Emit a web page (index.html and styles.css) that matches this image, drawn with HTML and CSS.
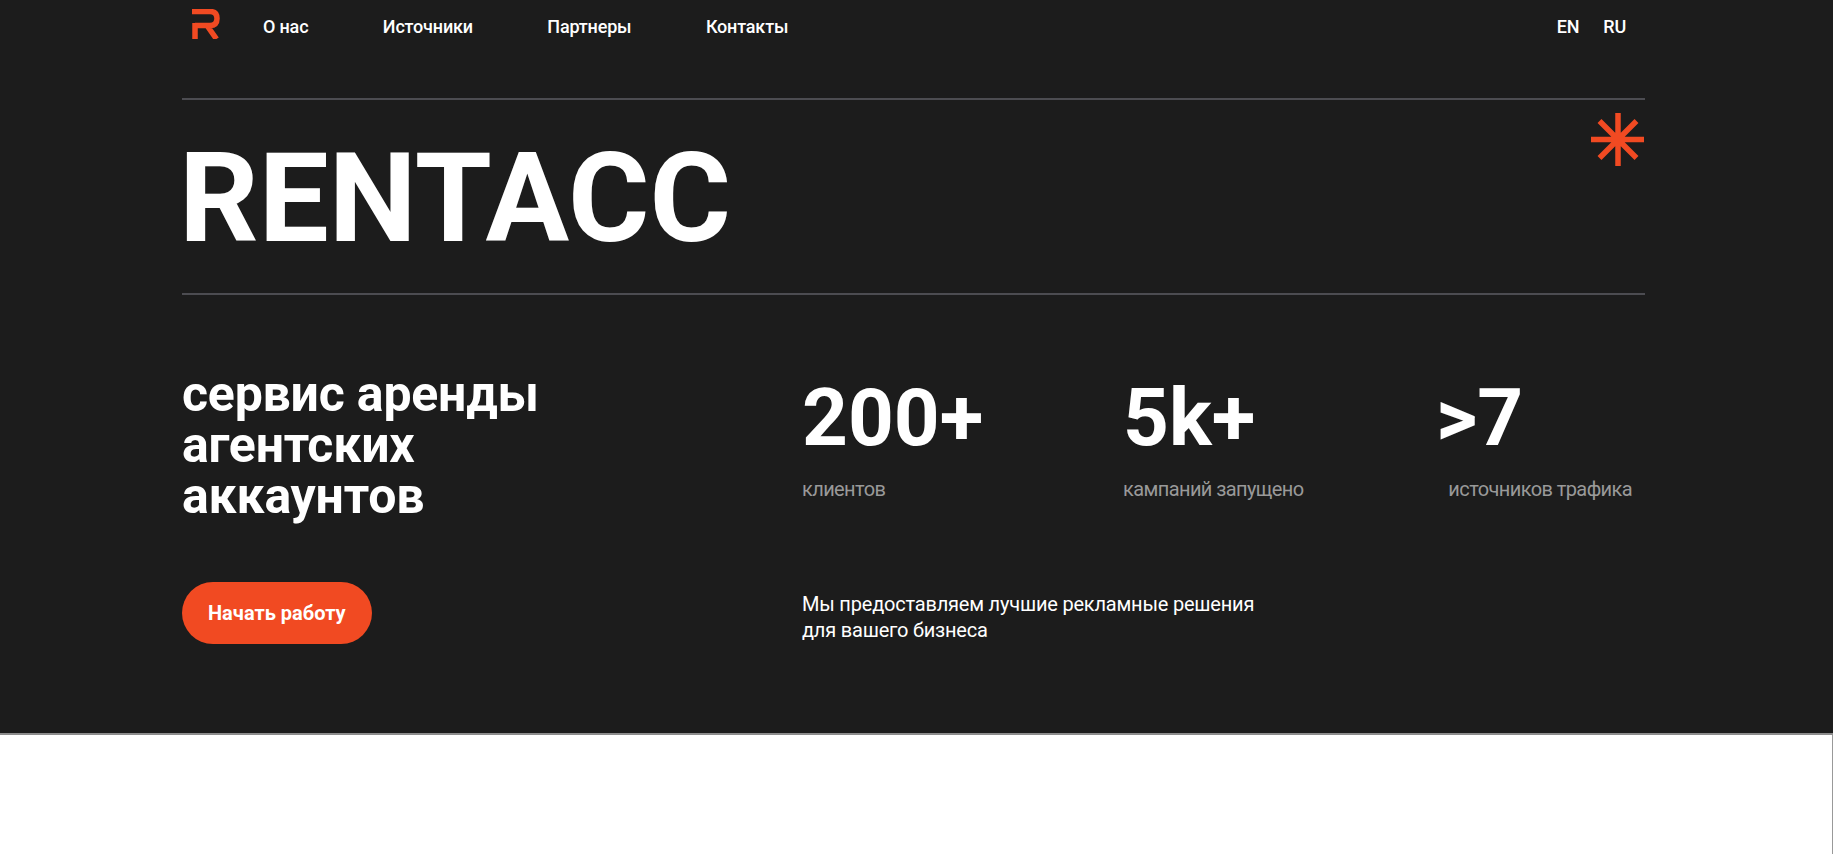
FILE: index.html
```html
<!DOCTYPE html>
<html>
<head>
    <title>Rentacc</title>
    <link rel="stylesheet" href="styles.css">
</head>
<body>
    <section class="hero">
        <div class="container">
            <header class="header">
                <svg class="logo" viewBox="0 0 28 30" width="28" height="30">
                    <path d="M0 2.500H18Q25 2.500 25 9.500Q25 16.500 18 16.500H3M3 14V30M15 16.500L24.500 30" fill="none" stroke="#f14a22" stroke-width="5.500"/>
                </svg>
                <nav class="nav">
                    <a href="#">О нас</a>
                    <a href="#">Источники</a>
                    <a href="#">Партнеры</a>
                    <a href="#">Контакты</a>
                </nav>
                <div class="lang">
                    <a href="#">EN</a>
                    <a href="#">RU</a>
                </div>
            </header>

            <div class="title-row">
                <h1>RENTACC</h1>
                <svg class="star" viewBox="0 0 54 54" width="54" height="54">
                    <path d="M27 0V53M0 26.500H53M8.500 8L45.500 45M45.500 8L8.500 45" fill="none" stroke="#f14a22" stroke-width="5.500"/>
                </svg>
            </div>

            <div class="info">
                <div class="left">
                    <h2>сервис аренды агентских аккаунтов</h2>
                    <a href="#" class="btn">Начать работу</a>
                </div>
                <div class="right">
                    <div class="stats">
                        <div class="stat stat-one">
                            <div class="num">200+</div>
                            <div class="label">клиентов</div>
                        </div>
                        <div class="stat stat-two">
                            <div class="num">5k+</div>
                            <div class="label">кампаний запущено</div>
                        </div>
                        <div class="stat stat-three">
                            <div class="num">&gt;7</div>
                            <div class="label">источников трафика</div>
                        </div>
                    </div>
                    <p class="desc">Мы предоставляем лучшие рекламные решения для вашего бизнеса</p>
                </div>
            </div>
        </div>
    </section>
    <div class="below"></div>
</body>
</html>
```
FILE: styles.css
```css
body {
    font-family: Roboto, Arial, sans-serif;
    margin: 0;
    padding: 0;
    background-color: #fff;
}

a {
    color: #fff;
    text-decoration: none;
}

.hero {
    background-color: #1c1c1c;
    color: #fff;
    height: 733px;
    border-bottom: 2px solid #8c8c8c;
}

.below {
    height: 119px;
    border-right: 1px solid #999;
}

.container {
    width: 1463px;
    margin-left: 182px;
}

.header {
    display: flex;
    align-items: center;
    height: 100px;
    padding-bottom: 45px;
    padding-left: 10px;
    padding-right: 19px;
    box-sizing: border-box;
    border-bottom: 2px solid #4c4c51;
}

.logo {
    flex-shrink: 0;
    align-self: flex-start;
    margin-top: 9px;
}

.nav {
    display: flex;
    gap: 74.500px;
    margin-left: 43px;
    flex: 1;
}

.nav a, .lang a {
    font-size: 18px;
    font-weight: 500;
    letter-spacing: -0.01em;
}

.lang {
    display: flex;
    gap: 24px;
}

.title-row {
    display: flex;
    justify-content: space-between;
    height: 193px;
    border-bottom: 2px solid #4c4c51;
}

h1 {
    font-size: 124.500px;
    font-weight: 700;
    line-height: 1;
    margin: 36px 0 0 -3px;
}

.star {
    margin-top: 13px;
}

.info {
    display: flex;
    padding-top: 74px;
}

.left {
    width: 620px;
}

h2 {
    font-size: 50px;
    font-weight: 700;
    letter-spacing: -0.2px;
    line-height: 51px;
    margin: 0 0 60px;
    width: 400px;
}

.btn {
    display: inline-block;
    background-color: #f14a22;
    font-size: 20px;
    font-weight: 700;
    line-height: 62px;
    padding: 0 26px;
    border-radius: 31px;
}

.stats {
    display: flex;
    padding-top: 9px;
}

.num {
    font-size: 80px;
    font-weight: 700;
    line-height: 80px;
}

.label {
    color: #999;
    font-size: 20px;
    letter-spacing: -0.03em;
    margin-top: 19px;
}

.stat-one {
    width: 321px;
}

.stat-two {
    width: 313px;
}

.stat-three {
    width: 196px;
}

.stat-three .label {
    text-align: right;
}

.desc {
    font-size: 20px;
    letter-spacing: -0.01em;
    line-height: 26px;
    width: 470px;
    margin: 90px 0 0;
}
```
